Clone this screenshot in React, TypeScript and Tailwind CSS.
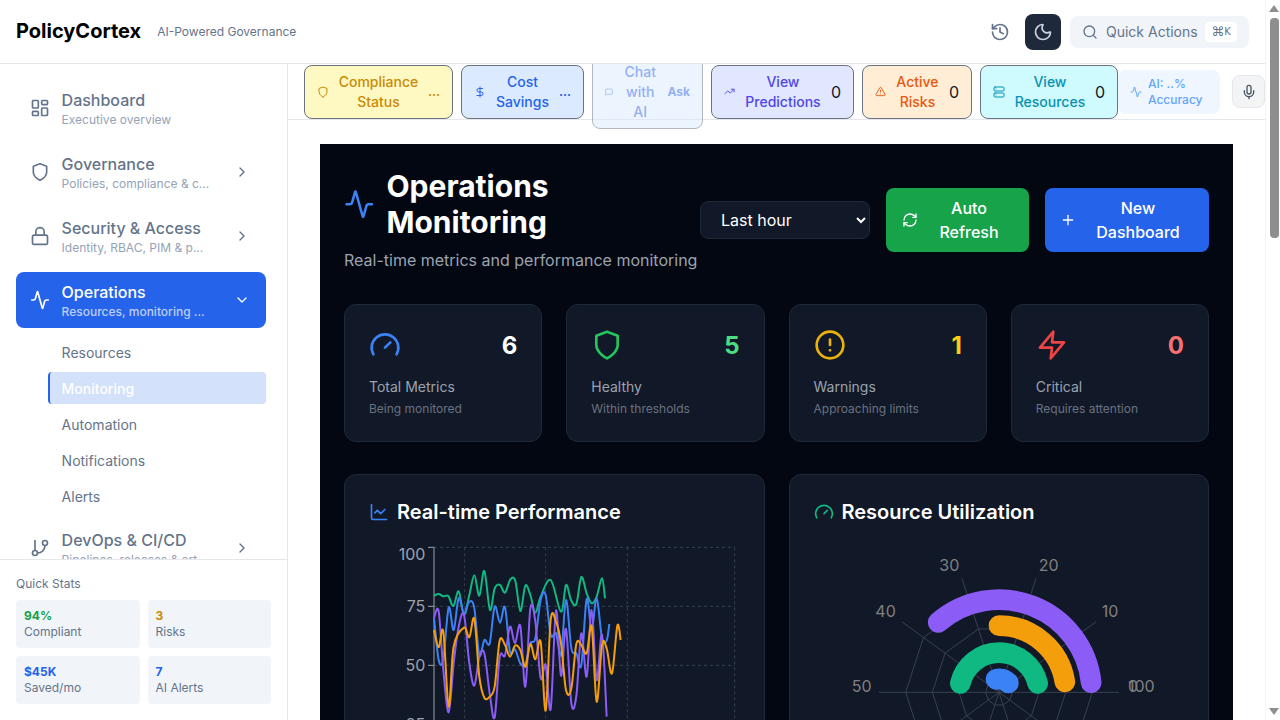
import React from 'react';
import {
  Activity,
  ChartLine,
  ChevronDown,
  ChevronRight,
  CircleAlert,
  DollarSign,
  Gauge,
  GitBranch,
  History,
  LayoutDashboard,
  Lock,
  MessageSquare,
  Mic,
  Moon,
  Plus,
  RefreshCw,
  Search,
  Server,
  TrendingUp,
  TriangleAlert,
} from 'lucide-react';

const ShieldIcon = ({ className }: { className?: string }) => (
  <svg
    viewBox="0 0 24 24"
    fill="none"
    stroke="currentColor"
    strokeWidth={2}
    strokeLinecap="round"
    strokeLinejoin="round"
    className={className}
  >
    <path d="M12 22s8-4 8-10V5l-8-3-8 3v7c0 6 8 10 8 10z" />
  </svg>
);

const ZapIcon = ({ className }: { className?: string }) => (
  <svg
    viewBox="0 0 24 24"
    fill="none"
    stroke="currentColor"
    strokeWidth={2}
    strokeLinecap="round"
    strokeLinejoin="round"
    className={className}
  >
    <polygon points="13 2 3 14 12 14 11 22 21 10 12 10 13 2" />
  </svg>
);

interface NavItemProps {
  icon: React.ReactNode;
  title: string;
  sub: string;
  chevron?: boolean;
}

const NavItem = ({ icon, title, sub, chevron }: NavItemProps) => (
  <div className="flex h-14 shrink-0 items-center rounded-lg pr-[16.5px] pl-[13.6px] text-[#64748b]">
    <div className="mr-3 shrink-0">{icon}</div>
    <div className="min-w-0 flex-1">
      <div className="text-base leading-6 font-medium">{title}</div>
      <div className="truncate text-xs leading-4 text-[#94a3b8]">{sub}</div>
    </div>
    {chevron && <ChevronRight className="h-4 w-4 shrink-0" />}
  </div>
);

const Sidebar = () => (
  <aside className="flex w-[288px] shrink-0 flex-col border-r border-[#e5e7eb] bg-white">
    <nav className="flex min-h-0 flex-1 flex-col gap-2 overflow-hidden pt-4 pr-[21px] pl-4">
      <NavItem
        icon={<LayoutDashboard className="h-5 w-5" />}
        title="Dashboard"
        sub="Executive overview"
      />
      <NavItem
        icon={<ShieldIcon className="h-5 w-5" />}
        title="Governance"
        sub="Policies, compliance & c..."
        chevron
      />
      <NavItem
        icon={<Lock className="h-5 w-5" />}
        title="Security & Access"
        sub="Identity, RBAC, PIM & p..."
        chevron
      />
      <div className="flex h-14 shrink-0 items-center rounded-lg bg-[#2563eb] pr-[16.5px] pl-[13.6px] text-white">
        <Activity className="mr-3 h-5 w-5 shrink-0" />
        <div className="min-w-0 flex-1">
          <div className="text-base leading-6 font-medium">Operations</div>
          <div className="truncate text-xs leading-4 font-medium text-white/70">
            Resources, monitoring ...
          </div>
        </div>
        <ChevronDown className="h-4 w-4 shrink-0" />
      </div>
      <div className="flex flex-col gap-1 pl-8 text-sm text-[#64748b]">
        <div className="h-8 px-[13.6px] leading-[34px]">Resources</div>
        <div className="h-8 rounded border-l-2 border-[#2563eb] bg-[#d3e1fb] px-[11.6px] leading-[34px] font-medium text-white">
          Monitoring
        </div>
        <div className="h-8 px-[13.6px] leading-[34px]">Automation</div>
        <div className="h-8 px-[13.6px] leading-[34px]">Notifications</div>
        <div className="h-8 px-[13.6px] leading-[34px]">Alerts</div>
      </div>
      <NavItem
        icon={<GitBranch className="h-5 w-5" />}
        title="DevOps & CI/CD"
        sub="Pipelines, releases & art..."
        chevron
      />
    </nav>
    <div className="border-t border-[#e5e7eb] p-4">
      <div className="mb-2 text-xs leading-4 text-[#64748b]">Quick Stats</div>
      <div className="grid grid-cols-2 gap-2">
        <StatTile value="94%" label="Compliant" color="text-[#16a34a]" />
        <StatTile value="3" label="Risks" color="text-[#ca8a04]" />
        <StatTile value="$45K" label="Saved/mo" color="text-[#2563eb]" />
        <StatTile value="7" label="AI Alerts" color="text-[#2563eb]" />
      </div>
    </div>
  </aside>
);

const StatTile = (props: { value: string; label: string; color: string }) => (
  <div className="rounded bg-[#f1f5f9] p-2 text-xs leading-4">
    <div className={`font-bold ${props.color}`}>{props.value}</div>
    <div className="text-[#64748b]">{props.label}</div>
  </div>
);

interface ActionProps {
  icon: React.ReactNode;
  label: string;
  badge: string;
  width: string;
  color: string;
  badgeClass?: string;
}

const ActionButton = ({ icon, label, badge, width, color, badgeClass }: ActionProps) => (
  <div
    className={`flex shrink-0 items-center gap-2 rounded-lg border border-[#6b7280] px-3 py-1.5 text-sm leading-5 font-medium ${width} ${color}`}
  >
    <span className="shrink-0">{icon}</span>
    <span className="flex-1 text-center">{label}</span>
    <span className={`shrink-0 ${badgeClass ?? 'text-xs font-bold'}`}>{badge}</span>
  </div>
);

const ActionBar = () => (
  <div className="flex h-14 shrink-0 items-center gap-2 border-b border-[#e5e7eb] pl-4">
    <ActionButton
      icon={<ShieldIcon className="h-3 w-3" />}
      label="Compliance Status"
      badge="..."
      width="w-[149px]"
      color="bg-[#fef9c3] text-[#ca8a04]"
    />
    <ActionButton
      icon={<DollarSign className="h-3 w-3" />}
      label="Cost Savings"
      badge="..."
      width="w-[123px]"
      color="bg-[#dbeafe] text-[#2563eb]"
    />
    <ActionButton
      icon={<MessageSquare className="h-2 w-2" />}
      label="Chat with AI"
      badge="Ask"
      width="w-[111px] opacity-50"
      color="bg-[#dbeafe] text-[#2563eb]"
    />
    <ActionButton
      icon={<TrendingUp className="h-[11px] w-[11px]" />}
      label="View Predictions"
      badge="0"
      width="w-[143px]"
      color="bg-[#e0e7ff] text-[#4f46e5]"
      badgeClass="text-base font-normal text-[#111827]"
    />
    <ActionButton
      icon={<TriangleAlert className="h-[11px] w-[11px]" />}
      label="Active Risks"
      badge="0"
      width="w-[110px]"
      color="bg-[#ffedd5] text-[#ea580c]"
      badgeClass="text-base font-normal text-[#111827]"
    />
    <ActionButton
      icon={<Server className="h-3 w-3" />}
      label="View Resources"
      badge="0"
      width="w-[138px]"
      color="bg-[#cffafe] text-[#0891b2]"
      badgeClass="text-base font-normal text-[#111827]"
    />
    <div className="-ml-2 flex h-11 w-[102px] shrink-0 items-center gap-1.5 rounded-lg bg-[#eff6ff] pl-3 text-xs leading-4 font-medium text-[#60a5fa]">
      <Activity className="h-3 w-3 shrink-0" />
      <div>
        AI: ..%
        <br />
        Accuracy
      </div>
    </div>
    <div className="ml-1 flex h-[33px] w-[33px] shrink-0 items-center justify-center rounded-lg border border-[#e5e7eb] bg-[#f3f4f6] text-[#4b5563]">
      <Mic className="h-4 w-4" />
    </div>
  </div>
);

interface MetricProps {
  icon: React.ReactNode;
  value: string;
  valueClass: string;
  label: string;
  sub: string;
}

const MetricCard = ({ icon, value, valueClass, label, sub }: MetricProps) => (
  <div className="rounded-xl border border-[#1f2937] bg-[#111827] p-6">
    <div className="mb-4 flex h-8 items-center justify-between">
      {icon}
      <span className={`pt-0.5 text-2xl font-bold ${valueClass}`}>{value}</span>
    </div>
    <div className="text-sm leading-5 text-[#9ca3af]">{label}</div>
    <div className="mt-1 text-xs leading-4 text-[#6b7280]">{sub}</div>
  </div>
);

type Pt = [number, number];

// catmull-rom, points are taken off the 3x crop of the chart
const smooth = (pts: Pt[]) => {
  let d = `M${pts[0][0]} ${pts[0][1]}`;
  for (let i = 0; i < pts.length - 1; i++) {
    const p0 = pts[Math.max(i - 1, 0)];
    const p1 = pts[i];
    const p2 = pts[i + 1];
    const p3 = pts[Math.min(i + 2, pts.length - 1)];
    const c1x = p1[0] + (p2[0] - p0[0]) / 6;
    const c1y = p1[1] + (p2[1] - p0[1]) / 6;
    const c2x = p2[0] - (p3[0] - p1[0]) / 6;
    const c2y = p2[1] - (p3[1] - p1[1]) / 6;
    d += ` C${c1x} ${c1y} ${c2x} ${c2y} ${p2[0]} ${p2[1]}`;
  }
  return d;
};

const green: Pt[] = [[282,197],[296,192],[310,199],[325,198],[340,228],[356,184],[372,255],[388,195],[403,136],[418,197],[433,123],[450,240],[464,175],[480,165],[495,188],[511,148],[526,153],[541,243],[556,167],[571,195],[586,248],[602,200],[632,150],[663,245],[678,165],[693,210],[709,222],[724,141],[740,190],[755,220],[770,200],[786,144],[795,205]];
const blue: Pt[] = [[282,262],[296,390],[310,385],[326,233],[341,300],[356,205],[372,250],[388,215],[403,235],[418,375],[433,330],[449,340],[464,230],[480,278],[495,232],[510,365],[525,358],[541,400],[556,403],[571,340],[586,325],[602,210],[617,195],[632,315],[648,310],[663,375],[678,210],[694,355],[709,370],[724,405],[740,207],[755,300],[770,205],[786,325],[800,332],[808,282]];
const purple: Pt[] = [[282,265],[296,244],[310,420],[326,547],[341,400],[356,290],[372,255],[388,400],[403,467],[418,380],[433,370],[449,490],[464,562],[479,382],[495,376],[510,290],[525,340],[541,288],[556,470],[571,236],[586,275],[602,445],[617,405],[632,537],[648,242],[663,437],[678,297],[694,520],[709,498],[724,310],[740,440],[755,240],[770,450],[786,315],[800,560]];
const orange: Pt[] = [[282,300],[296,352],[310,305],[326,530],[341,350],[372,293],[388,322],[403,267],[418,440],[433,503],[449,500],[464,470],[479,332],[495,345],[510,380],[525,347],[541,360],[556,410],[571,342],[586,388],[602,335],[617,542],[632,270],[648,275],[663,340],[678,480],[694,475],[709,342],[724,345],[740,370],[755,290],[770,515],[786,345],[800,355],[816,430],[832,287],[842,330]];

const PerformanceChart = () => (
  <svg viewBox="0 0 1260 570" className="-ml-[29px] block h-[190px] w-[420px] max-w-none">
    <g stroke="#374151" strokeWidth={3} strokeDasharray="9 9" fill="none">
      {[52, 229, 406, 583].map((y) => (
        <line key={y} x1={282} x2={1184} y1={y} y2={y} />
      ))}
      {[374, 617, 862, 1184].map((x) => (
        <line key={x} x1={x} x2={x} y1={52} y2={570} />
      ))}
    </g>
    <g stroke="#9ca3af" strokeWidth={3}>
      <line x1={282} x2={282} y1={52} y2={570} />
      {[52, 229, 406, 583].map((y) => (
        <line key={y} x1={264} x2={282} y1={y} y2={y} />
      ))}
    </g>
    <g fill="#9ca3af" fontSize={48} textAnchor="end">
      <text x={256} y={90}>100</text>
      <text x={256} y={247}>75</text>
      <text x={256} y={424}>50</text>
      <text x={256} y={601}>25</text>
    </g>
    <g fill="none" strokeWidth={6} strokeLinejoin="round">
      <path d={smooth(green)} stroke="#10b981" />
      <path d={smooth(blue)} stroke="#3b82f6" />
      <path d={smooth(purple)} stroke="#8b5cf6" />
      <path d={smooth(orange)} stroke="#f59e0b" />
    </g>
  </svg>
);

const CX = 597;
const CY = 487;

const polar = (r: number, deg: number): Pt => [
  CX + r * Math.cos((deg * Math.PI) / 180),
  CY - r * Math.sin((deg * Math.PI) / 180),
];

const arc = (r: number, from: number, to: number) => {
  const a = polar(r, from);
  const b = polar(r, to);
  return `M${a[0]} ${a[1]} A${r} ${r} 0 ${to - from > 180 ? 1 : 0} 0 ${b[0]} ${b[1]}`;
};

const angles = [0, 36, 72, 108, 144, 180, 216, 252, 288, 324];

const UtilizationChart = () => (
  <svg viewBox="0 0 1200 570" className="-ml-[14px] block h-[190px] w-[400px] max-w-none">
    <g stroke="#374151" strokeWidth={3} fill="none">
      {[40, 120, 200, 280].map((r) => (
        <polygon key={r} points={angles.map((a) => polar(r, a).join(',')).join(' ')} />
      ))}
      {angles.map((a) => {
        const p = polar(360, a);
        return <line key={a} x1={CX} y1={CY} x2={p[0]} y2={p[1]} />;
      })}
    </g>
    <g fill="#808080" fontSize={48}>
      <text x={984} y={485}>0</text>
      <text x={984} y={485}>100</text>
      <text x={905} y={260}>10</text>
      <text x={716} y={122}>20</text>
      <text x={418} y={122}>30</text>
      <text x={226} y={260}>40</text>
      <text x={155} y={485}>50</text>
    </g>
    <g fill="none" strokeWidth={62} strokeLinecap="round">
      <path d={arc(278, 6, 131)} stroke="#8b5cf6" />
      <path d={arc(200, 9, 90)} stroke="#f59e0b" />
      <path d={arc(119, 13, 167)} stroke="#10b981" />
      <path d={arc(40, 45, 103)} stroke="#3b82f6" />
    </g>
  </svg>
);

const Scrollbar = () => (
  <div className="flex w-[15px] shrink-0 flex-col items-center border-l border-[#f3f4f6] bg-white pl-[2px]">
    <div className="mt-[5px] h-0 w-0 border-x-[5px] border-b-[7px] border-x-transparent border-b-[#8e8e8e]" />
    <div className="mt-[6px] h-[220px] w-[9px] rounded-[4px] bg-[#8e8e8e]" />
    <div className="mt-auto mb-[5px] h-0 w-0 border-x-[5px] border-t-[7px] border-x-transparent border-t-[#8e8e8e]" />
  </div>
);

const App = () => (
  <div className="flex h-screen overflow-hidden bg-white font-['Inter',sans-serif]">
    <div className="flex min-w-0 flex-1 flex-col">
      <header className="relative z-10 flex h-16 shrink-0 items-center border-b border-[#e5e7eb] bg-white pr-4 pl-4">
        <span className="-mt-0.5 text-xl font-bold text-black">PolicyCortex</span>
        <span className="ml-4 text-xs text-[#64748b]">AI-Powered Governance</span>
        <div className="ml-auto flex items-center">
          <History className="h-5 w-5 text-[#64748b]" />
          <div className="ml-[15px] flex h-9 w-9 items-center justify-center rounded-lg bg-[#1e293b] text-[#cbd5e1]">
            <Moon className="h-5 w-5" />
          </div>
          <div className="ml-[9px] flex h-8 w-[179px] items-center rounded-lg bg-[#f1f5f9] pr-3 pl-3 text-sm text-[#64748b]">
            <Search className="mr-2 h-4 w-4 shrink-0" />
            <span>Quick Actions</span>
            <span className="ml-auto flex h-5 w-8 items-center justify-center rounded bg-white font-['DejaVu_Sans',sans-serif] text-[13px] leading-none">
              ⌘<span className="text-[10px]">K</span>
            </span>
          </div>
        </div>
      </header>
      <div className="flex min-h-0 flex-1">
        <Sidebar />
        <main className="flex min-w-0 flex-1 flex-col">
          <ActionBar />
          <div className="px-8 pt-6">
            <div className="bg-[#030712] p-6">
              <div className="flex items-center justify-between">
                <div>
                  <div className="flex items-center">
                    <Activity className="h-[30.5px] w-[30.5px] shrink-0 text-[#3b82f6]" />
                    <h1 className="ml-3 w-[200px] text-3xl font-bold text-white">
                      Operations Monitoring
                    </h1>
                  </div>
                  <p className="mt-2 text-base text-[#9ca3af]">
                    Real-time metrics and performance monitoring
                  </p>
                </div>
                <div className="flex items-center gap-4">
                  <select className="h-[38px] w-[170px] rounded-lg border border-[#1f2937] bg-[#111827] px-4 text-base text-white">
                    <option>Last hour</option>
                  </select>
                  <div className="flex h-16 w-[143px] items-center rounded-lg bg-[#16a34a] pr-[17px] pl-4 font-medium text-white">
                    <RefreshCw className="h-4 w-4 shrink-0" />
                    <span className="flex-1 pl-2 text-center">Auto Refresh</span>
                  </div>
                  <div className="flex h-16 w-[164px] items-center rounded-lg bg-[#2563eb] pr-[17px] pl-[15px] font-medium text-white">
                    <Plus className="h-4 w-4 shrink-0" />
                    <span className="flex-1 pl-2 text-center">New Dashboard</span>
                  </div>
                </div>
              </div>
              <div className="mt-8 grid grid-cols-4 gap-6">
                <MetricCard
                  icon={<Gauge className="h-8 w-8 text-[#3b82f6]" />}
                  value="6"
                  valueClass="text-white"
                  label="Total Metrics"
                  sub="Being monitored"
                />
                <MetricCard
                  icon={<ShieldIcon className="h-8 w-8 text-[#22c55e]" />}
                  value="5"
                  valueClass="text-[#4ade80]"
                  label="Healthy"
                  sub="Within thresholds"
                />
                <MetricCard
                  icon={<CircleAlert className="h-8 w-8 text-[#eab308]" />}
                  value="1"
                  valueClass="text-[#facc15]"
                  label="Warnings"
                  sub="Approaching limits"
                />
                <MetricCard
                  icon={<ZapIcon className="h-8 w-8 text-[#ef4444]" />}
                  value="0"
                  valueClass="text-[#f87171]"
                  label="Critical"
                  sub="Requires attention"
                />
              </div>
              <div className="mt-8 grid grid-cols-2 gap-6">
                <div className="h-[400px] rounded-xl border border-[#1f2937] bg-[#111827] p-6">
                  <div className="-mt-px flex items-center">
                    <ChartLine className="h-5 w-5 text-[#3b82f6]" />
                    <h2 className="ml-2 text-xl font-semibold text-white">Real-time Performance</h2>
                  </div>
                  <div className="mt-1">
                    <PerformanceChart />
                  </div>
                </div>
                <div className="h-[400px] rounded-xl border border-[#1f2937] bg-[#111827] p-6">
                  <div className="-mt-px flex items-center">
                    <Gauge className="h-5 w-5 text-[#10b981]" />
                    <h2 className="ml-2 text-xl font-semibold text-white">Resource Utilization</h2>
                  </div>
                  <div className="mt-1">
                    <UtilizationChart />
                  </div>
                </div>
              </div>
            </div>
          </div>
        </main>
      </div>
    </div>
    <Scrollbar />
  </div>
);

export default App;
